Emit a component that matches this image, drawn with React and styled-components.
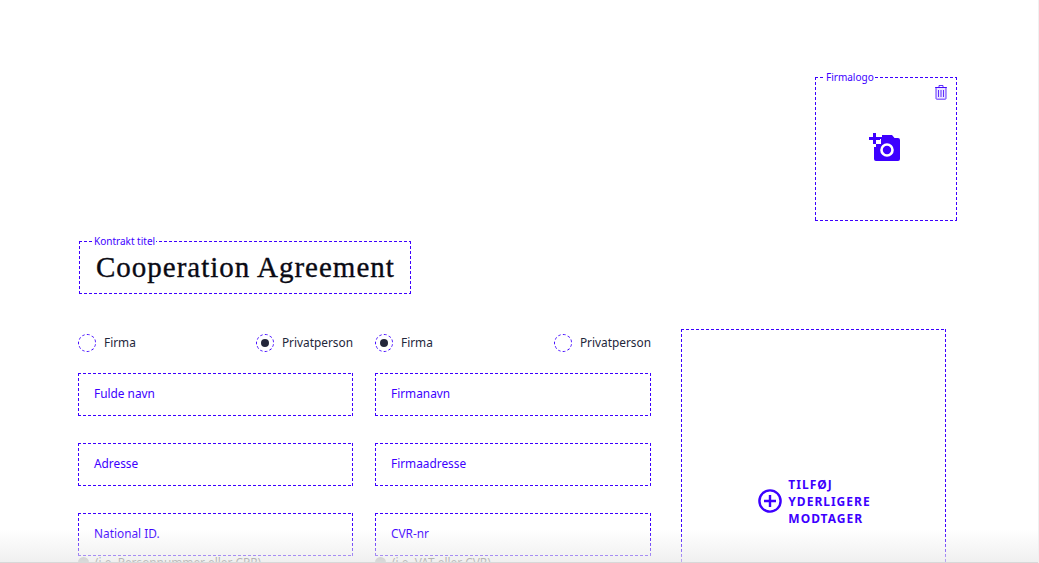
import React from 'react';
import styled, {createGlobalStyle, css} from 'styled-components';

const blue = '#3d00ff';

const GlobalStyle = createGlobalStyle`
html, body {
    margin: 0;
    padding: 0;
    height: 100%;
    overflow: hidden;
    background: #ffffff;
    font-family: "Noto Sans", "Open Sans", sans-serif;
}
`;

const App = () => {
    return (
        <Page>
            <GlobalStyle />
            <LogoRow>
                <LogoBox>
                    <BoxLabel offset={9}>Firmalogo</BoxLabel>
                    <TrashButton>
                        <svg width="14" height="16" viewBox="0 0 14 16" fill="none" stroke={blue} strokeWidth="1" strokeOpacity="0.8">
                            <path d="M1 3.500h12M5 3.500V1.500h4v2" />
                            <path fill={blue} fillOpacity="0.1" d="M2 3.500h10v11a.7.7 0 0 1-.7.7H2.700a.7.7 0 0 1-.7-.7z" />
                            <path d="M4.500 6v7M7 6v7M9.500 6v7" />
                        </svg>
                    </TrashButton>
                    <svg width="32" height="30" viewBox="0 0 32 30">
                        <path fill={blue} d="M5 7h5V4h3V2h10l2.500 3H29a2 2 0 0 1 2 2v19a2 2 0 0 1-2 2H7a2 2 0 0 1-2-2z" />
                        <circle cx="18" cy="17" r="5.500" fill="none" stroke="#ffffff" strokeWidth="2.600" />
                        <path fill="#ffffff" d="M0 6h12v5H7v3H0z" />
                        <path fill={blue} d="M4 0h3v4h4v3H7v4H4V7H0V4h4z" />
                    </svg>
                </LogoBox>
            </LogoRow>

            <TitleBox>
                <BoxLabel offset={13}>Kontrakt titel</BoxLabel>
                <Title>Cooperation Agreement</Title>
            </TitleBox>

            <FormGrid>
                <Column>
                    <RadioRow>
                        <Radio label="Firma" />
                        <Radio label="Privatperson" checked />
                    </RadioRow>
                    <Field>Fulde navn</Field>
                    <Field>Adresse</Field>
                    <Field>National ID.</Field>
                    <Hint>(i.e. Personnummer eller CPR)</Hint>
                </Column>
                <Column>
                    <RadioRow>
                        <Radio label="Firma" checked />
                        <Radio label="Privatperson" />
                    </RadioRow>
                    <Field>Firmanavn</Field>
                    <Field>Firmaadresse</Field>
                    <Field>CVR-nr</Field>
                    <Hint>(i.e. VAT eller CVR)</Hint>
                </Column>
                <AddBox>
                    <svg width="24" height="24" viewBox="0 0 24 24" fill="none" stroke={blue} strokeWidth="2.400">
                        <circle cx="12" cy="12" r="10.600" />
                        <path d="M12 6v12M6 12h12" />
                    </svg>
                    <AddText>TILFØJ<br />YDERLIGERE<br />MODTAGER</AddText>
                </AddBox>
            </FormGrid>
            <BottomFade />
        </Page>
    );
};

const Radio = ({label, checked}) => (
    <RadioLabel>
        <RadioCircle checked={checked} />
        <RadioText>{label}</RadioText>
    </RadioLabel>
);

const Page = styled.div`
position: relative;
height: 563px;
overflow: hidden;
box-sizing: border-box;
padding: 77px 81px 0 78px;
border-right: 1px solid #f0f0f0;
`;

const LogoRow = styled.div`
display: flex;
justify-content: flex-end;
`;

// chrome draws 1px dashed as 3/3, the reference has 3 on 2 off
const dashH = `repeating-linear-gradient(90deg, ${blue} 0 3px, transparent 3px 5px)`;
const dashV = `repeating-linear-gradient(180deg, ${blue} 0 3px, transparent 3px 5px)`;

const dashedBox = css`
box-sizing: border-box;
border: 1px solid transparent;
background:
    ${dashH} left top / 100% 1px no-repeat border-box,
    ${dashH} left bottom / 100% 1px no-repeat border-box,
    ${dashV} left top / 1px 100% no-repeat border-box,
    ${dashV} right top / 1px 100% no-repeat border-box;
`;

const LogoBox = styled.div`
${dashedBox}
position: relative;
width: 142px;
height: 144px;
display: flex;
align-items: center;
justify-content: center;
padding-right: 3px;
padding-bottom: 3px;
`;

const BoxLabel = styled.span`
position: absolute;
top: -7px;
left: ${({offset}) => offset}px;
padding: 0 1px;
background: #ffffff;
font-size: 10px;
line-height: 12px;
color: ${blue};
`;

const TrashButton = styled.div`
position: absolute;
top: 6px;
right: 8px;
display: flex;
`;

const TitleBox = styled.div`
${dashedBox}
position: relative;
width: 332px;
height: 53px;
margin: 20px 0 0 1px;
display: flex;
align-items: center;
padding-left: 16px;
`;

const Title = styled.h1`
margin: 0;
font-family: "Liberation Serif", serif;
font-weight: 400;
font-size: 29px;
line-height: 1;
letter-spacing: 1px;
-webkit-text-stroke: 0.35px #0a0a14;
white-space: nowrap;
color: #0a0a14;
`;

const FormGrid = styled.div`
display: grid;
grid-template-columns: 275px 276px 273px;
column-gap: 22px;
margin-top: 35px;
align-items: start;
`;

const Column = styled.div`
display: flex;
flex-direction: column;
`;

const RadioRow = styled.div`
display: flex;
justify-content: space-between;
height: 44px;
padding-top: 5px;
box-sizing: border-box;
`;

const RadioLabel = styled.label`
display: flex;
align-items: center;
gap: 8px;
height: 18px;
font-size: 11.850px;
line-height: 16px;
color: #23263a;
`;

const RadioText = styled.span`
margin-bottom: 2px;
`;

const RadioCircle = styled.span`
width: 18px;
height: 18px;
box-sizing: border-box;
border: 1px dashed ${blue};
border-radius: 50%;
display: flex;
align-items: center;
justify-content: center;

&::after {
    content: "";
    display: ${({checked}) => (checked ? 'block' : 'none')};
    width: 8px;
    height: 8px;
    border-radius: 50%;
    background: #23263a;
}
`;

const Field = styled.div`
${dashedBox}
height: 43px;
margin-bottom: 27px;
padding: 0 0 4px 15px;
display: flex;
align-items: center;
font-size: 11.850px;
color: ${blue};
`;

const Hint = styled.div`
position: relative;
margin-top: -28px;
padding-left: 17px;
font-size: 11.850px;
line-height: 14px;
color: #444444;

&::before {
    content: "";
    position: absolute;
    left: 0;
    top: 2px;
    width: 11px;
    height: 11px;
    border-radius: 50%;
    background: #a8a8a8;
}
`;

const AddBox = styled.div`
${dashedBox}
margin-left: 8px;
height: 300px;
display: flex;
align-items: center;
justify-content: center;
gap: 6px;
padding: 43px 0 0 2px;
`;

const AddText = styled.div`
padding-top: 2px;
font-size: 12px;
font-weight: 700;
letter-spacing: 1px;
line-height: 17px;
color: ${blue};
`;

const BottomFade = styled.div`
position: absolute;
left: 0;
right: 0;
bottom: 0;
height: 34px;
background: linear-gradient(180deg, rgba(235,235,235,0) 0%, rgba(235,235,235,0.75) 100%);
border-bottom: 1px solid #d8d8d8;
box-sizing: border-box;
pointer-events: none;
`;

export default App;
